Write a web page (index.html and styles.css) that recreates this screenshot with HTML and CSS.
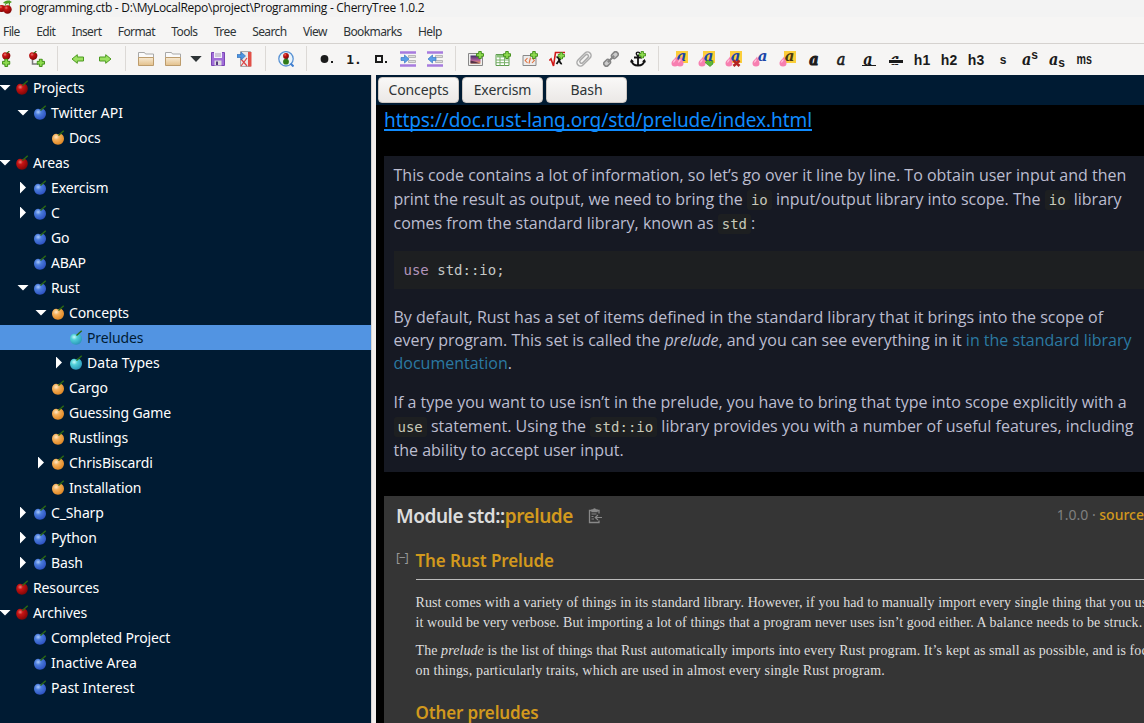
FILE: index.html
```html
<!DOCTYPE html>
<html lang="en">
<head>
<meta charset="utf-8">
<title>programming.ctb - CherryTree</title>
<link rel="stylesheet" href="styles.css">
</head>
<body>
<svg class="defs" aria-hidden="true">
  <defs>
    <radialGradient id="g-red" cx=".35" cy=".3" r=".75"><stop offset="0" stop-color="#e88078"/><stop offset=".3" stop-color="#c81414"/><stop offset="1" stop-color="#7c0505"/></radialGradient>
    <radialGradient id="g-blue" cx=".35" cy=".3" r=".75"><stop offset="0" stop-color="#a9c8fa"/><stop offset=".35" stop-color="#4a7cdc"/><stop offset="1" stop-color="#2c4fc0"/></radialGradient>
    <radialGradient id="g-orange" cx=".35" cy=".3" r=".75"><stop offset="0" stop-color="#ffe9c8"/><stop offset=".35" stop-color="#f5b05a"/><stop offset="1" stop-color="#dd8420"/></radialGradient>
    <radialGradient id="g-cyan" cx=".35" cy=".3" r=".75"><stop offset="0" stop-color="#c8fbfa"/><stop offset=".35" stop-color="#4fcfd8"/><stop offset="1" stop-color="#2a94b8"/></radialGradient>
    <linearGradient id="g-folder" x2="0" y2="1"><stop offset="0" stop-color="#f7ead4"/><stop offset="1" stop-color="#e3c08a"/></linearGradient>
    <linearGradient id="g-pic" x2="0" y2="1"><stop offset="0" stop-color="#3b2a66"/><stop offset=".6" stop-color="#b0609a"/><stop offset="1" stop-color="#f0a050"/></linearGradient>
    <symbol id="red" viewBox="0 0 16 16"><path d="M8 4.500C10 2.700 13.800 4.500 13.800 8.500c0 3.500-2.500 6.200-5.800 6.200s-5.800-2.700-5.800-6.200C2.200 4.500 6 2.800 8 4.500z" fill="url(#g-red)"/><path d="M8.500 5.500 13.700.8" stroke="#2c6a12" stroke-width="1.400"/></symbol>
    <symbol id="blue" viewBox="0 0 16 16"><path d="M8 4.500C10 2.700 14 4.500 14 8.500c0 3.500-2.500 6.200-6 6.200s-6-2.700-6-6.200C2 4.500 6 2.800 8 4.500z" fill="url(#g-blue)"/><path d="M8.500 5.500 13.700.8" stroke="#2c6a12" stroke-width="1.400"/></symbol>
    <symbol id="orange" viewBox="0 0 16 16"><path d="M8 4.500C10 2.700 14 4.500 14 8.500c0 3.500-2.500 6.200-6 6.200s-6-2.700-6-6.200C2 4.500 6 2.800 8 4.500z" fill="url(#g-orange)"/><path d="M8.500 5.500 13.700.8" stroke="#2c6a12" stroke-width="1.400"/></symbol>
    <symbol id="cyan" viewBox="0 0 16 16"><path d="M8 4.500C10 2.700 14 4.500 14 8.500c0 3.500-2.500 6.200-6 6.200s-6-2.700-6-6.200C2 4.500 6 2.800 8 4.500z" fill="url(#g-cyan)"/><path d="M8.500 5.500 13.700.8" stroke="#2c6a12" stroke-width="1.400"/></symbol>
    <symbol id="plus" viewBox="0 0 8 8"><path d="M2.700.5h2.600v2.200h2.200v2.600H5.300v2.200H2.700V5.300H.5V2.700h2.200z" fill="#8edb4f" stroke="#3c8a14" stroke-width=".9"/></symbol>
    <symbol id="drop" viewBox="0 0 8 11"><path d="M5 .5C5.500 3 7.500 5 7.500 7.300A3.500 3.200 0 0 1 .5 7.300C.5 4.800 3.500 3.500 5 .5z" fill="#f77fb0"/><path d="M2.500 6.500C2.800 5 4 4.500 4.500 3.500" stroke="#ffc4de" stroke-width="1.200" fill="none"/></symbol>
  </defs>
</svg>

<header class="titlebar">
  <svg class="app-icon" viewBox="0 0 14 16"><path d="M4 9C5 4 7 2 10 1M9 10C9 6 9.500 3 10 1" stroke="#3c8a14" fill="none"/><path d="M3 3C5 0 9-.5 12 2 9 4 6 4 3 3z" fill="#4f9d22"/><circle cx="1.800" cy="8.500" r="3.600" fill="url(#g-red)"/><circle cx="7.500" cy="9.500" r="4.200" fill="url(#g-red)"/></svg>
  <span>programming.ctb - D:\MyLocalRepo\project\Programming - CherryTree 1.0.2</span>
</header>
<nav class="menubar">
  <span>File</span><span>Edit</span><span>Insert</span><span>Format</span><span>Tools</span><span>Tree</span><span>Search</span><span>View</span><span>Bookmarks</span><span>Help</span>
</nav>

<div class="toolbar">
  <span class="tb"><svg viewBox="0 0 16 16"><path d="M4 6v6" stroke="#555" stroke-width="1.500"/><use href="#red" x="-1.500" y="-1.500" width="11.500" height="11.500"/><use href="#plus" y="7.500" width="8.500" height="8.500"/></svg></span>
  <span class="tb"><svg viewBox="0 0 16 16"><path d="M3.500 7v6H9" stroke="#777" stroke-width="1.500" fill="none"/><use href="#red" x="-1.500" y="-1.500" width="11.500" height="11.500"/><use href="#plus" x="7.500" y="7.500" width="8.500" height="8.500"/></svg></span>
  <i class="sep"></i>
  <span class="tb"><svg viewBox="0 0 16 16"><path d="M2 8l5.300-4.300V6H13.500v4H7.300v2.300z" fill="#9be060" stroke="#4d9a20"/></svg></span>
  <span class="tb"><svg viewBox="0 0 16 16"><path d="M14 8 8.700 3.700V6H2.500v4h6.200v2.300z" fill="#9be060" stroke="#4d9a20"/></svg></span>
  <i class="sep"></i>
  <span class="tb"><svg viewBox="0 0 16 16"><path d="M.5 7V1.500h6l1 1.500h8V7" fill="#fafafa" stroke="#a8a8a8"/><path d="M.5 6.500h15V14.500H.5z" fill="url(#g-folder)" stroke="#bd9c6c"/></svg></span>
  <span class="tb"><svg viewBox="0 0 16 16"><path d="M.5 7V1.500h6l1 1.500h8V7" fill="#fafafa" stroke="#a8a8a8"/><path d="M.5 6.500h15V14.500H.5z" fill="url(#g-folder)" stroke="#bd9c6c"/></svg></span>
  <span class="tb arrow"><svg viewBox="0 0 12 16"><path d="M.3 5h11.400L6 11z" fill="#2e3436"/></svg></span>
  <span class="tb"><svg viewBox="0 0 16 16"><path d="M1.500 1.500h13v13h-13z" fill="#a06cd8" stroke="#7a45b4"/><path d="M4 1h8v6H4z" fill="#f3eefa"/><path d="M5 3h6M5 5h6" stroke="#a7a0b4"/><path d="M4.500 9.500h7v5h-7z" fill="#ddd"/><path d="M6 10.500h2v3.500H6z" fill="#553a80"/></svg></span>
  <span class="tb"><svg viewBox="0 0 16 16"><path d="M3.500.5h10v15h-10z" fill="#e9e9e9" stroke="#aaa"/><path d="M11 1h3.500v14.500H11z" fill="#e25048"/><path d="M4 15 10 7M4 8l6 7" stroke="#d44" stroke-width="1.200"/><path d="M0 3.500h4V1l4.500 4L4 9V6.500H0z" fill="#4c94e0" stroke="#2a66b0" stroke-width=".6"/></svg></span>
  <i class="sep"></i>
  <span class="tb"><svg viewBox="0 0 16 16"><circle cx="8" cy="7.800" r="7.200" fill="#eaf4fb" stroke="#5a93d4" stroke-width="1.300"/><path d="M12.500 12.500l3 3" stroke="#3f7ed0" stroke-width="2"/><circle cx="8" cy="5" r="2.900" fill="url(#g-red)"/><circle cx="8" cy="10.700" r="2.900" fill="#2f7a18"/><path d="M8.500 8 10 6.800" stroke="#333"/></svg></span>
  <i class="sep"></i>
  <span class="tb"><svg viewBox="0 0 16 16"><circle cx="5.500" cy="8" r="3.900" fill="#1b1b1b"/><path d="M12 10h2v2h-2z" fill="#1b1b1b"/></svg></span>
  <span class="tb t1">1.</span>
  <span class="tb"><svg viewBox="0 0 16 16"><path d="M3 5h6v6H3z" fill="none" stroke="#1b1b1b" stroke-width="2"/><path d="M12 10h2v2h-2z" fill="#1b1b1b"/></svg></span>
  <span class="tb"><svg viewBox="0 0 16 16"><path d="M0 .2h16v2.600H0zM0 13.200h16v2.600H0z" fill="#a77bde"/><path d="M8.500 4.500h7v2h-7zM8.500 9.500h7v2h-7z" fill="#ddd" stroke="#aaa" stroke-width=".8"/><path d="M1 6.500h3.500V4L9 8l-4.500 4V9.500H1z" fill="#5a9de8" stroke="#3a78c4" stroke-width=".7"/></svg></span>
  <span class="tb"><svg viewBox="0 0 16 16"><path d="M0 .2h16v2.600H0zM0 13.200h16v2.600H0z" fill="#a77bde"/><path d="M8.500 4.500h7v2h-7zM8.500 9.500h7v2h-7z" fill="#ddd" stroke="#aaa" stroke-width=".8"/><path d="M9 6.500H5.500V4L1 8l4.500 4V9.500H9z" fill="#5a9de8" stroke="#3a78c4" stroke-width=".7"/></svg></span>
  <i class="sep"></i>
  <span class="tb"><svg viewBox="0 0 16 16"><path d="M.5 2.500h14v12H.5z" fill="#eee" stroke="#888"/><path d="M2.500 4.500h10v8h-10z" fill="url(#g-pic)"/><path d="M2.500 12.500v-3l4 1 6 2z" fill="#54304a"/><use href="#plus" x="8" width="8" height="8" y="0"/></svg></span>
  <span class="tb"><svg viewBox="0 0 16 16"><path d="M1 3.500h13v11H1z" fill="#fff" stroke="#5f9c50"/><path d="M1.500 4h12v2.500h-12z" fill="#8cc47c"/><path d="M1 9h13M1 11.700h13M5 6v8.500M9.500 6v8.500" stroke="#78b068"/><use href="#plus" x="8" width="8" height="8"/></svg></span>
  <span class="tb"><svg viewBox="0 0 16 16"><path d="M1 4.500h13v10H1z" fill="#ececec" stroke="#8a8a8a"/><path d="M5.500 7 3.200 9.500 5.500 12M10 7l2.300 2.500L10 12M8.500 6.500l-1.500 6" stroke="#e2703c" fill="none" stroke-width="1.100"/><use href="#plus" x="8" width="8" height="8"/></svg></span>
  <span class="tb"><svg viewBox="0 0 16 16"><path d="M.3 9.500 2 8l2.500 7L6.500 1.500H16" stroke="#cf1717" fill="none" stroke-width="1.600"/><path d="M7.500 6.500c3-2 2.500 7 5.500 6M13 5.500 7.500 13" stroke="#111" fill="none" stroke-width="1.800"/><use href="#plus" x="8.500" y="1" width="7.500" height="7.500"/></svg></span>
  <span class="tb"><svg viewBox="0 0 16 16"><g transform="rotate(45 8 8)" fill="none" stroke="#aaa" stroke-width="1.500"><rect x="4.500" y="-.5" width="7" height="17" rx="3.500"/><path d="M9.700 4v7.500a1.700 1.700 0 0 1-3.400 0V4a1.700 1.700 0 0 1 3.400 0"/></g></svg></span>
  <span class="tb"><svg viewBox="0 0 16 16"><g transform="rotate(45 8 8)" fill="#ccc" stroke="#858585" stroke-width="1.600"><rect x="5.500" y="-1" width="5" height="7" rx="2.200"/><rect x="5.500" y="10" width="5" height="7" rx="2.200"/><path d="M8 3.500v9" stroke-width="2"/></g></svg></span>
  <span class="tb"><svg viewBox="0 0 16 16"><circle cx="8" cy="2.800" r="1.700" fill="none" stroke="#111" stroke-width="1.400"/><path d="M8 4.500V15M4 6.500h8M1.500 9.500c.5 3.500 3 5 6.500 5s6-1.500 6.500-5" fill="none" stroke="#111" stroke-width="1.800"/><path d="M0 11.500 1.300 8 4 10.500zM16 11.500 14.700 8 12 10.500z" fill="#111"/><use href="#plus" x="8.500" width="7.500" height="7.500"/></svg></span>
  <i class="sep"></i>
  <span class="tb dye"><b class="ink">a</b><svg viewBox="0 0 16 16"><use href="#drop" x="0" y="5" width="8" height="11"/><use href="#drop" x="5" y="5" width="8" height="11"/></svg></span>
  <span class="tb dye"><b class="ink">a</b><svg viewBox="0 0 16 16"><use href="#drop" x="0" y="5" width="8" height="11"/><path d="M7 11.500l3-2.500 2 2 3-1.500v3.500L12 15.500z" fill="#5cb83a" stroke="#3a8a20" stroke-width=".6"/></svg></span>
  <span class="tb dye"><b class="ink">a</b><svg viewBox="0 0 16 16"><use href="#drop" x="0" y="5" width="8" height="11"/><path d="M8.500 9.500l6 5.500M14.500 9.500l-6 5.500" stroke="#b32222" stroke-width="2.600"/></svg></span>
  <span class="tb dye"><b class="ink plain">a</b><svg viewBox="0 0 16 16"><use href="#drop" x="0" y="5" width="8" height="11"/></svg></span>
  <span class="tb dye"><b class="ink dark">a</b><svg viewBox="0 0 16 16"><use href="#drop" x="0" y="5" width="8" height="11"/></svg></span>
  <span class="tb ser heavy">a</span>
  <span class="tb ser it">a</span>
  <span class="tb ser under">a</span>
  <span class="tb ser struck">a</span>
  <span class="tb hd">h1</span>
  <span class="tb hd">h2</span>
  <span class="tb hd">h3</span>
  <span class="tb hd small">s</span>
  <span class="tb ser">a<sup>s</sup></span>
  <span class="tb ser">a<sub>s</sub></span>
  <span class="tb ms"><span>ms</span></span>
</div>

<main class="work">
  <aside class="tree">
    <div class="row d0"><i class="down"></i><svg><use href="#red"/></svg><span>Projects</span></div>
    <div class="row d1"><i class="down"></i><svg><use href="#blue"/></svg><span class="wide">Twitter API</span></div>
    <div class="row d2"><i></i><svg><use href="#orange"/></svg><span>Docs</span></div>
    <div class="row d0"><i class="down"></i><svg><use href="#red"/></svg><span>Areas</span></div>
    <div class="row d1"><i class="right"></i><svg><use href="#blue"/></svg><span>Exercism</span></div>
    <div class="row d1"><i class="right"></i><svg><use href="#blue"/></svg><span>C</span></div>
    <div class="row d1"><i></i><svg><use href="#blue"/></svg><span>Go</span></div>
    <div class="row d1"><i></i><svg><use href="#blue"/></svg><span>ABAP</span></div>
    <div class="row d1"><i class="down"></i><svg><use href="#blue"/></svg><span>Rust</span></div>
    <div class="row d2"><i class="down"></i><svg><use href="#orange"/></svg><span>Concepts</span></div>
    <div class="row d3 selected"><i></i><svg><use href="#cyan"/></svg><span>Preludes</span></div>
    <div class="row d3"><i class="right"></i><svg><use href="#cyan"/></svg><span class="wide">Data Types</span></div>
    <div class="row d2"><i></i><svg><use href="#orange"/></svg><span>Cargo</span></div>
    <div class="row d2"><i></i><svg><use href="#orange"/></svg><span>Guessing Game</span></div>
    <div class="row d2"><i></i><svg><use href="#orange"/></svg><span>Rustlings</span></div>
    <div class="row d2"><i class="right"></i><svg><use href="#orange"/></svg><span>ChrisBiscardi</span></div>
    <div class="row d2"><i></i><svg><use href="#orange"/></svg><span>Installation</span></div>
    <div class="row d1"><i class="right"></i><svg><use href="#blue"/></svg><span>C_Sharp</span></div>
    <div class="row d1"><i class="right"></i><svg><use href="#blue"/></svg><span>Python</span></div>
    <div class="row d1"><i class="right"></i><svg><use href="#blue"/></svg><span>Bash</span></div>
    <div class="row d0"><i></i><svg><use href="#red"/></svg><span>Resources</span></div>
    <div class="row d0"><i class="down"></i><svg><use href="#red"/></svg><span>Archives</span></div>
    <div class="row d1"><i></i><svg><use href="#blue"/></svg><span>Completed Project</span></div>
    <div class="row d1"><i></i><svg><use href="#blue"/></svg><span class="wide">Inactive Area</span></div>
    <div class="row d1"><i></i><svg><use href="#blue"/></svg><span class="wide">Past Interest</span></div>
  </aside>
  <div class="handle"></div>
  <section class="editor">
    <div class="tabs"><button>Concepts</button><button>Exercism</button><button>Bash</button></div>
    <div class="page">
      <a class="url"><span>https://doc.rust-lang.org/std/prelude/index.html</span></a>
      <article class="book">
        <p>This code contains a lot of information, so let’s go over it line by line. To obtain user input and then<br>print the result as output, we need to bring the <code>io</code> input/output library into scope. The <code>io</code> library<br>comes from the standard library, known as <code>std</code>:</p>
        <pre><span class="kw">use</span> std::io;</pre>
        <p class="tight">By default, Rust has a set of items defined in the standard library that it brings into the scope of<br>every program. This set is called the <em>prelude</em>, and you can see everything in it <a>in the standard library</a><br><a>documentation</a>.</p>
        <p>If a type you want to use isn’t in the prelude, you have to bring that type into scope explicitly with a<br><code>use</code> statement. Using the <code>std::io</code> library provides you with a number of useful features, including<br>the ability to accept user input.</p>
      </article>
      <article class="rustdoc">
        <div class="fqn">
          <h1>Module std::<b>prelude</b></h1>
          <svg class="copy" viewBox="0 0 16 16"><path d="M12 5.500V2.500H2.500v12H12v-2M5 3.500V2h1.500a1 1 0 0 1 2 0H10v1.500z" fill="none" stroke="#888" stroke-width="1.300"/><path d="M4.500 6h5M4.500 8.500h2M4.500 11h2.500M15 9.500H8.500M11 7 8.300 9.500 11 12" fill="none" stroke="#888" stroke-width="1.200"/></svg>
          <span class="since">1.0.0 · <b>source</b></span>
        </div>
        <div class="section">
          <span class="toggle">[−]</span>
          <h2>The Rust Prelude</h2>
        </div>
        <div class="body">
          <p>Rust comes with a variety of things in its standard library. However, if you had to manually import every single thing that you use,<br>it would be very verbose. But importing a lot of things that a program never uses isn’t good either. A balance needs to be struck.</p>
          <p>The <em>prelude</em> is the list of things that Rust automatically imports into every Rust program. It’s kept as small as possible, and is focused<br><span class="last">on things, particularly traits, which are used in almost every single Rust program.</span></p>
          <h2>Other preludes</h2>
        </div>
      </article>
    </div>
  </section>
</main>
</body>
</html>
```
FILE: styles.css
```css
* { box-sizing: border-box; }
body {
  margin: 0;
  width: 1144px;
  height: 723px;
  overflow: hidden;
  display: flex;
  flex-direction: column;
  background: #f6f5f4;
  font-family: "Noto Sans", "Open Sans", sans-serif;
  color: #2e3436;
}
.defs { position: absolute; width: 0; height: 0; }

.titlebar {
  height: 17px;
  display: flex;
  background: #f3f3f3;
  font: 12px/16px "Open Sans", sans-serif;
  letter-spacing: -.28px;
  color: #111;
  white-space: nowrap;
}
.app-icon { width: 14px; height: 16px; margin-right: 5px; flex: none; }

.menubar {
  height: 27px;
  display: flex;
  gap: 16.400px;
  padding-left: 3px;
  border-bottom: 1px solid #d5d2cf;
  font-size: 12px;
  line-height: 30px;
  letter-spacing: -.6px;
}

.toolbar {
  height: 31px;
  display: flex;
  flex: none;
  align-items: flex-start;
  margin-left: -3.500px;
}
.tb {
  width: 27px;
  height: 30px;
  flex: none;
  display: flex;
  align-items: center;
  justify-content: center;
  position: relative;
  color: #1b1b1b;
  white-space: nowrap;
}
.tb svg { width: 16px; height: 16px; }
.tb.arrow { width: 18px; }
.tb.arrow svg { width: 12px; }
.sep { width: 14px; height: 25px; margin-top: 2px; flex: none; background: linear-gradient(#dcd9d6, #dcd9d6) 6.500px 0 / 1px 100% no-repeat; }
.t1 { font: bold 13px "DejaVu Sans Mono", monospace; }
.dye .ink {
  position: absolute;
  left: 10px;
  top: 7px;
  width: 12px;
  height: 12px;
  background: #fbce3a;
  color: #1c46a8;
  font: italic bold 15px/10px "DejaVu Serif", serif;
  text-align: center;
}
.dye .ink.plain { background: none; }
.dye .ink.dark { color: #4a3a10; }
.dye svg { position: relative; }
.ser { font: italic bold 16px "DejaVu Serif Condensed", "DejaVu Serif", serif; }
.ser.heavy { -webkit-text-stroke: 1px #1b1b1b; }
.ser.it { font-weight: normal; -webkit-text-stroke: .6px #1b1b1b; }
.ser sup, .ser sub { font: bold 12px/1 "Liberation Sans", sans-serif; }
.ser sup { margin-top: -9px; }
.ser sub { margin-top: 7px; }
.under::after { content: ""; position: absolute; left: 7px; right: 6px; top: 21px; height: 1px; background: #1b1b1b; }
.struck::after { content: ""; position: absolute; left: 7px; right: 6px; top: 15px; height: 3px; border: solid #f6f5f4; border-width: 1px 0; background: #1b1b1b; }
.hd { font: bold 14px "Liberation Sans", sans-serif; padding-top: 2px; }
.hd.small { font-size: 12px; }
.ms span { font: bold 14px "Liberation Sans", sans-serif; transform: scaleX(.76); }

.work { flex: 1; display: flex; min-height: 0; }
.tree { width: 371px; flex: none; background: #001b33; color: #fff; font-size: 14px; letter-spacing: -.13px; }
.row { height: 25px; display: flex; align-items: center; line-height: 25px; white-space: nowrap; }
.row i { width: 14px; flex: none; }
.row svg { width: 16px; height: 16px; margin-right: 3px; flex: none; }
.wide { letter-spacing: .03px; }
.d1 { padding-left: 18px; }
.d2 { padding-left: 36px; }
.d3 { padding-left: 54px; }
.selected { background: #5294e2; color: #001b33; }
.down::before { content: ""; display: block; width: 12px; height: 6px; margin-left: -1px; background: #fff; clip-path: polygon(0 0, 100% 0, 50% 100%); }
.right::before { content: ""; display: block; width: 6px; height: 12px; margin-left: 2px; background: #fff; clip-path: polygon(0 0, 100% 50%, 0 100%); }

.handle { width: 5px; flex: none; background: #f3efed; border-left: 1px solid #d8d4d2; }

.editor { flex: 1; min-width: 0; display: flex; flex-direction: column; background: #000; }
.tabs { height: 30px; flex: none; display: flex; gap: 3px; padding: 2px; background: #001b33; }
.tabs button {
  width: 81px;
  height: 26px;
  padding: 0;
  border: 1px solid #cdc7c2;
  border-radius: 4px;
  background: linear-gradient(#f9f8f7, #ebe8e6);
  font: 14px/22px "Noto Sans", sans-serif;
  letter-spacing: -.1px;
  color: #2e3436;
}
.page { padding-left: 8px; overflow: hidden; white-space: nowrap; }
.url { display: block; height: 51px; font-size: 19px; line-height: 30px; letter-spacing: -.09px; color: #0f8bff; }
.url span { display: inline-block; height: 26px; border-bottom: 2px solid #0f8bff; }

.book {
  height: 316px;
  padding: 7px 0 0 9.500px;
  background: #161923;
  color: #bcbdd0;
  font: 16px/24px "Open Sans", sans-serif;
}
.book p { margin: 0 0 15.500px; }
.book p.tight { margin: 17px 0 14.500px; line-height: 23px; }
.book a { color: #2b79a2; }
.book code, .book pre { font: 14px "DejaVu Sans Mono", monospace; color: #c8c9b8; }
.book code { padding: 2px 4px; border-radius: 3px; background: #1d1f21; }
.book pre { height: 38px; margin: 16px 0; padding-left: 10px; line-height: 38px; background: #1d1f21; color: #c5c8c6; }
.book .kw { color: #b294bb; }

.rustdoc {
  height: 227px;
  margin-top: 24px;
  background: #353535;
  color: #ddd;
  overflow: hidden;
}
.fqn { display: flex; align-items: center; height: 40px; padding-left: 12px; }
h1, h2 { margin: 0; font-family: "Noto Sans", sans-serif; font-weight: 600; }
h1 { font-size: 19px; letter-spacing: -.46px; }
h1 b, h2, .since b { color: #d2991d; font-weight: 600; }
.copy { width: 16px; height: 16px; margin-left: 14px; }
.since { margin-left: auto; padding-bottom: 4px; font-size: 14px; color: #808080; }
.since b { font-weight: 500; }
.section { display: flex; height: 44px; padding-left: 12px; }
.toggle { width: 19.500px; padding-top: 13px; font-size: 12px; line-height: 18px; color: #999; letter-spacing: -1px; }
h2 { flex: 1; font-size: 17px; line-height: 49px; letter-spacing: -.1px; }
.section h2 { border-bottom: 1px solid #bbb; }
.body { padding: 13px 0 0 31.500px; font: 14px/19.600px "Liberation Serif", serif; letter-spacing: .08px; }
.body p { margin: 0 0 9.200px; }
.body .last { letter-spacing: .16px; }
.body h2 { line-height: 30px; padding-top: 8px; letter-spacing: -.15px; }
```
